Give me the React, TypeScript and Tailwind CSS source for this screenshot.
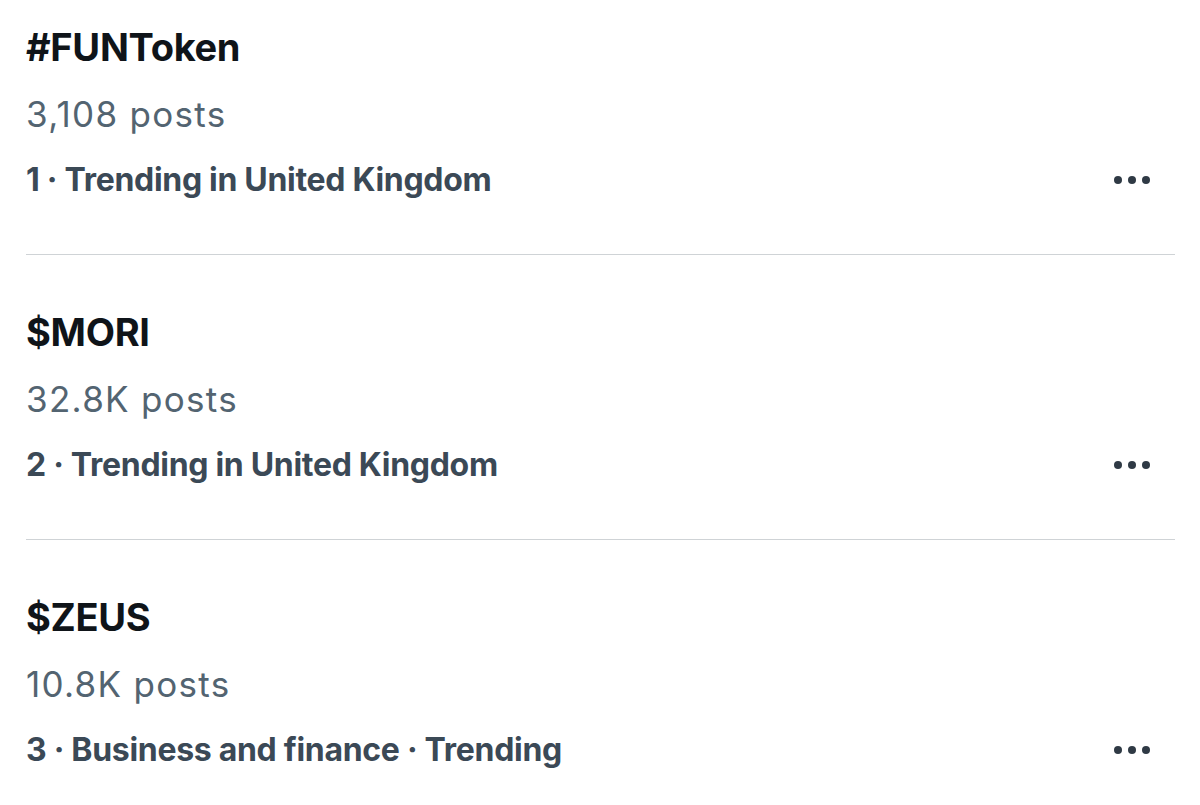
const TRENDS = [
  { title: '#FUNToken', posts: '3,108 posts', meta: '1 · Trending in United Kingdom' },
  { title: '$MORI', posts: '32.8K posts', meta: '2 · Trending in United Kingdom' },
  { title: '$ZEUS', posts: '10.8K posts', meta: '3 · Business and finance · Trending' },
]

function MoreDots() {
  return (
    <div className="flex items-center gap-[6px] pr-[25px]">
      <span className="block w-[8px] h-[8px] rounded-full bg-[#2f3a45]" />
      <span className="block w-[8px] h-[8px] rounded-full bg-[#2f3a45]" />
      <span className="block w-[8px] h-[8px] rounded-full bg-[#2f3a45]" />
    </div>
  )
}

export default function App() {
  return (
    <div
      className="w-[1200px] h-[805px] bg-white overflow-hidden pl-[26px] pr-[25px]"
      style={{ fontFamily: 'Inter, "Liberation Sans", sans-serif' }}
    >
      {TRENDS.map((t, i) => (
        <div
          key={t.title}
          className={`${i === 0 ? 'pt-[23px]' : 'pt-[53px] border-t border-[#cfd3d6]'} pb-[54px]`}
        >
          <div className="text-[38px] leading-[48px] font-bold text-[#0f1419] tracking-[-0.3px]">{t.title}</div>
          <div className="mt-[21px] text-[35px] leading-[44px] text-[#536471] tracking-[1.3px]">{t.posts}</div>
          <div className="mt-[24px] flex items-center justify-between">
            <span className="text-[32px] leading-[40px] font-bold text-[#3b4956] tracking-[-0.3px]">{t.meta}</span>
            <MoreDots />
          </div>
        </div>
      ))}
    </div>
  )
}
